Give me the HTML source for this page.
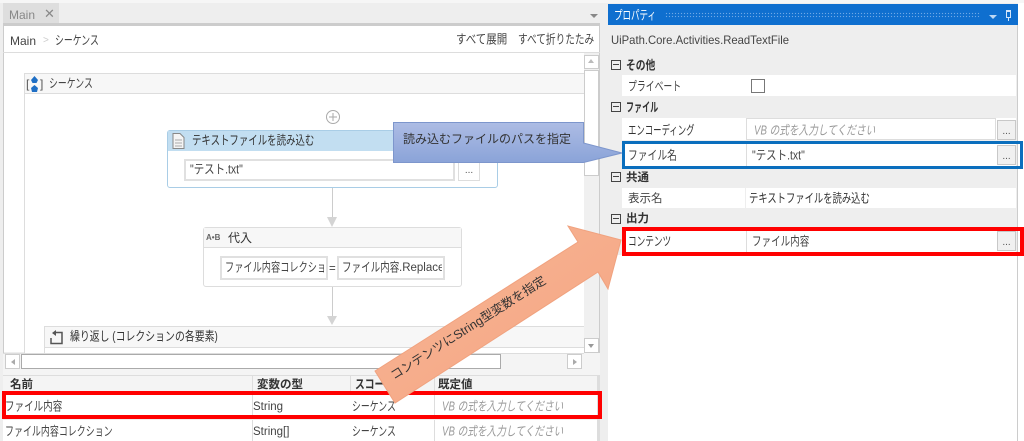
<!DOCTYPE html>
<html lang="ja"><head><meta charset="utf-8"><style>
html,body{margin:0;padding:0}
body{width:1024px;height:441px;position:relative;overflow:hidden;background:#fff;font:11.5px "Liberation Sans","Noto Sans CJK JP",sans-serif;color:#444}
div,span.a{position:absolute;box-sizing:border-box}
#w{left:0;top:0;width:1024px;height:441px;filter:blur(.3px)}
.t{white-space:nowrap;line-height:16px;height:16px;margin-top:1px;transform-origin:left center}
.s{display:inline-block;transform-origin:left center}
.b{font-weight:bold;color:#333}
.i{color:#999;font-style:italic}
.sb{background:#fff;border:1px solid #ccc}
.inp{background:#fff;border:2px solid #e0e0e0}
.btn{background:#f0f0f0;border:1px solid #c8c8c8;color:#555;text-align:center;line-height:22px;font-size:10px}
.row{background:#fff;left:622px;width:394px}
.minus{width:10px;height:10px;left:611px;border:1px solid #444}
.minus:after{content:"";position:absolute;left:1px;right:1px;top:3px;height:1px;background:#444}
</style></head><body><div id="w">
<div style="left:0;top:0;width:1024px;height:441px;background:#eee"></div>
<div style="left:608px;top:255px;width:410px;height:186px;background:#fff"></div>
<div style="left:1018px;top:0;width:6px;height:441px;background:#fff"></div>
<div style="left:1017px;top:25px;width:1px;height:416px;background:#ccc"></div>
<div style="left:0;top:0;width:1024px;height:3px;background:#f6f6f6"></div>

<!-- left panel -->
<div style="left:3px;top:3px;width:56px;height:21px;background:#dedede"></div>
<div class="t" style="left:9px;top:6px;color:#888;font-size:12px">Main</div>
<div class="t" style="left:44px;top:5px;color:#888;font-size:13px">✕</div>
<div style="left:3px;top:23px;width:597px;height:3px;background:#ccc"></div>
<div style="left:590px;top:14px;width:0;height:0;border:4px solid transparent;border-top:4px solid #888"></div>
<div style="left:3px;top:26px;width:597px;height:326px;background:#fff"></div>
<div style="left:3px;top:26px;width:1px;height:350px;background:#ccc"></div>
<div style="left:599px;top:26px;width:1px;height:350px;background:#ccc"></div>
<div class="t" style="left:10px;top:32px;font-size:12px">Main</div>
<div class="t" style="left:43px;top:32px;color:#ccc;font-size:10px">&gt;</div>
<div class="t" style="left:55px;top:32px;transform:scale(.77,1.1)">シーケンス</div>
<div class="t" style="left:456px;top:31px;transform:scale(.91,1.1)">すべて展開</div>
<div class="t" style="left:518px;top:31px;transform:scale(.84,1.1)">すべて折りたたみ</div>
<div style="left:3px;top:52px;width:597px;height:1px;background:#ddd"></div>

<!-- sequence -->
<div style="left:24px;top:73px;width:560px;height:280px;border:1px solid #ddd;border-right:0;border-bottom:0;background:#fff"></div>
<div style="left:25px;top:74px;width:559px;height:20px;background:#f7f7f7;border-bottom:1px solid #ddd"></div>
<div class="t" style="left:26px;top:75px;color:#555;font-size:12px">[</div>
<div class="t" style="left:40px;top:75px;color:#555;font-size:12px">]</div>
<svg style="position:absolute;left:29px;top:75px" width="11" height="18"><path d="M5.500 1L9 5 7.500 8h-4L2 5Z M2 13l3.500-3L9 13l-1 4H3Z" fill="#1f6fc5"/></svg>
<div class="t" style="left:49px;top:75px;transform:scale(.77,1.1)">シーケンス</div>
<svg style="position:absolute;left:325px;top:109px" width="16" height="16"><circle cx="8" cy="8" r="6.500" fill="#fff" stroke="#aaa"/><path d="M8 4v8M4 8h8" stroke="#aaa"/></svg>

<!-- read activity -->
<div style="left:167px;top:130px;width:331px;height:58px;border:1px solid #a9cde6;border-radius:3px;background:#fff"></div>
<div style="left:168px;top:131px;width:329px;height:20px;background:#c2def1"></div>
<svg style="position:absolute;left:171px;top:132px" width="15" height="18"><path d="M2 1.500h7l4 4v11H2Z" fill="#f4f4f4" stroke="#888"/><path d="M4 8h7M4 11h7M4 14h7" stroke="#aaa"/></svg>
<div class="t" style="left:192px;top:132px;color:#333;transform:scale(.82,1.1)">テキストファイルを読み込む</div>
<div class="inp" style="left:184px;top:159px;width:271px;height:22px"></div>
<div class="t" style="left:190px;top:161px;transform:scale(.91,1.1)">"テスト.txt"</div>
<div class="btn" style="left:458px;top:159px;width:22px;height:22px;background:#fff;border-color:#ddd">...</div>

<!-- connector -->
<div style="left:332px;top:188px;width:1px;height:32px;background:#ccc"></div>
<div style="left:327px;top:217px;width:0;height:0;border-left:5px solid transparent;border-right:5px solid transparent;border-top:10px solid #d4d4d4"></div>

<!-- assign -->
<div style="left:203px;top:227px;width:259px;height:60px;border:1px solid #ddd;border-radius:3px;background:#fff"></div>
<div style="left:204px;top:228px;width:257px;height:20px;background:#f7f7f7;border-bottom:1px solid #ddd"></div>
<div class="t" style="left:206px;top:229px;font-size:8px;font-weight:bold;color:#666">A•B</div>
<div class="t" style="left:228px;top:229px;color:#333;font-size:12px">代入</div>
<div class="inp" style="left:220px;top:256px;width:108px;height:24px"></div>
<div class="t" style="left:225px;top:259px;width:99px;overflow:hidden"><span class="s" style="transform:scale(.8,1.1)">ファイル内容コレクション</span></div>
<div class="t" style="left:329px;top:260px">=</div>
<div class="inp" style="left:337px;top:256px;width:108px;height:24px"></div>
<div class="t" style="left:342px;top:259px;width:100px;overflow:hidden"><span class="s" style="transform:scale(.83,1.1);width:57px">ファイル内容</span><span>.Replace</span></div>

<div style="left:332px;top:287px;width:1px;height:32px;background:#ccc"></div>
<div style="left:327px;top:316px;width:0;height:0;border-left:5px solid transparent;border-right:5px solid transparent;border-top:9px solid #d4d4d4"></div>

<!-- foreach -->
<div style="left:44px;top:326px;width:540px;height:27px;border:1px solid #ddd;border-right:0;background:#f7f7f7"></div>
<div style="left:45px;top:347px;width:539px;height:6px;background:#fff;border-top:1px solid #ddd"></div>
<svg style="position:absolute;left:48px;top:329px" width="16" height="16"><path d="M6 3.500h8v11H3V9" fill="none" stroke="#555" stroke-width="1.500"/><path d="M8 1L4 4l4 3Z" fill="#555"/></svg>
<div class="t" style="left:70px;top:328px;color:#333;transform:scale(.86,1.1)">繰り返し (コレクションの各要素)</div>

<!-- scrollbars -->
<div style="left:584px;top:53px;width:15px;height:300px;background:#f0f0f0"></div>
<div class="sb" style="left:584px;top:55px;width:15px;height:14px"></div>
<div style="left:588px;top:59px;width:0;height:0;border:3.500px solid transparent;border-bottom:4px solid #bbb;border-top:0"></div>
<div class="sb" style="left:584px;top:70px;width:15px;height:106px"></div>
<div class="sb" style="left:584px;top:338px;width:15px;height:15px"></div>
<div style="left:588px;top:344px;width:0;height:0;border:3.500px solid transparent;border-top:4px solid #999;border-bottom:0"></div>
<div style="left:3px;top:353px;width:597px;height:22px;background:#f4f4f4"></div>
<div style="left:3px;top:353px;width:581px;height:1px;background:#ddd"></div>
<div class="sb" style="left:5px;top:354px;width:15px;height:15px"></div>
<div style="left:11px;top:359px;width:0;height:0;border:3px solid transparent;border-right:4px solid #aaa;border-left:0"></div>
<div style="left:21px;top:354px;width:480px;height:15px;background:#fff;border:1px solid #aaa"></div>
<div class="sb" style="left:567px;top:354px;width:15px;height:15px"></div>
<div style="left:573px;top:359px;width:0;height:0;border:3px solid transparent;border-left:4px solid #aaa;border-right:0"></div>

<!-- variables -->
<div style="left:3px;top:375px;width:597px;height:66px;background:#fff"></div>
<div style="left:3px;top:375px;width:597px;height:18px;background:#f4f4f4;border-top:1px solid #ddd"></div>
<div style="left:252px;top:375px;width:1px;height:66px;background:#ddd"></div>
<div style="left:350px;top:375px;width:1px;height:18px;background:#ddd"></div>
<div style="left:434px;top:375px;width:1px;height:66px;background:#ddd"></div>
<div style="left:597px;top:375px;width:3px;height:66px;background:#ddd"></div>
<div style="left:3px;top:419px;width:594px;height:1px;background:#eee"></div>
<div class="t b" style="left:10px;top:376px">名前</div>
<div class="t b" style="left:257px;top:376px">変数の型</div>
<div class="t b" style="left:355px;top:376px;transform:scale(.85,1.1)">スコープ</div>
<div class="t b" style="left:438px;top:376px">既定値</div>
<div class="t" style="left:5px;top:398px;transform:scale(.83,1.1)">ファイル内容</div>
<div class="t" style="left:253px;top:398px">String</div>
<div class="t" style="left:352px;top:398px;transform:scale(.77,1.1)">シーケンス</div>
<div class="t i" style="left:442px;top:398px;transform:scale(.84,1.1)">VB の式を入力してください</div>
<div class="t" style="left:5px;top:423px;transform:scale(.78,1.1)">ファイル内容コレクション</div>
<div class="t" style="left:253px;top:423px">String[]</div>
<div class="t" style="left:352px;top:423px;transform:scale(.77,1.1)">シーケンス</div>
<div class="t i" style="left:442px;top:423px;transform:scale(.84,1.1)">VB の式を入力してください</div>
<div style="left:2px;top:391px;width:600px;height:28px;border:4px solid #f00"></div>

<!-- properties -->
<div style="left:608px;top:4px;width:410px;height:21px;background:#0f6fcf"></div>
<div class="t" style="left:614px;top:7px;color:#fff;font-size:11.5px;transform:scale(.74,1.1)">プロパティ</div>
<div style="left:665px;top:12px;width:315px;height:6px;background-image:radial-gradient(#6fa8e6 0.7px,transparent 0.8px);background-size:3px 3px"></div>
<div style="left:989px;top:15px;width:0;height:0;border:4px solid transparent;border-top:4px solid #bcd8f5"></div>
<div style="left:1006px;top:10px;width:5px;height:8px;border:1px solid #d4e6fa;border-top:2px solid #d4e6fa"></div>
<div style="left:1008px;top:18px;width:1px;height:3px;background:#d4e6fa"></div>
<div class="t" style="left:611px;top:31px;font-size:12px;transform:scaleX(.94)">UiPath.Core.Activities.ReadTextFile</div>

<div class="minus" style="top:60px"></div><div class="t b" style="left:626px;top:57px;transform:scale(.85,1.1)">その他</div>
<div class="row" style="top:75px;height:21px"></div>
<div class="t" style="left:628px;top:78px;transform:scale(.77,1.1)">プライベート</div>
<div style="left:751px;top:79px;width:14px;height:14px;border:1px solid #777;background:#fff"></div>

<div class="minus" style="top:102px"></div><div class="t b" style="left:626px;top:99px;transform:scale(.7,1.1)">ファイル</div>
<div class="row" style="top:118px;height:22px"></div>
<div class="t" style="left:628px;top:122px;color:#333;transform:scale(.73,1.1)">エンコーディング</div>
<div style="left:746px;top:118px;width:250px;height:22px;border:1px solid #ddd;background:#fff"></div>
<div class="t i" style="left:754px;top:122px;transform:scale(.84,1.1)">VB の式を入力してください</div>
<div class="btn" style="left:997px;top:120px;width:19px;height:20px">...</div>

<div class="row" style="top:144px;height:22px"></div>
<div class="t" style="left:628px;top:147px;transform:scale(.85,1.1)">ファイル名</div>
<div style="left:746px;top:144px;width:250px;height:22px;border-left:1px solid #ddd;background:#fff"></div>
<div class="t" style="left:752px;top:147px;transform:scale(.91,1.1)">"テスト.txt"</div>
<div class="btn" style="left:997px;top:145px;width:19px;height:20px">...</div>
<div style="left:622px;top:141px;width:401px;height:28px;border:3px solid #0a6ebd"></div>

<div class="minus" style="top:172px"></div><div class="t b" style="left:626px;top:169px">共通</div>
<div class="row" style="top:188px;height:20px"></div>
<div style="left:745px;top:188px;width:1px;height:20px;background:#eee"></div>
<div class="t" style="left:628px;top:190px">表示名</div>
<div class="t" style="left:749px;top:190px;color:#333;transform:scale(.81,1.1)">テキストファイルを読み込む</div>

<div class="minus" style="top:214px"></div><div class="t b" style="left:626px;top:210px">出力</div>
<div class="row" style="top:230px;height:22px"></div>
<div class="t" style="left:628px;top:233px;color:#333;transform:scale(.75,1.1)">コンテンツ</div>
<div style="left:746px;top:230px;width:250px;height:22px;border-left:1px solid #ddd;background:#fff"></div>
<div class="t" style="left:752px;top:233px;transform:scale(.83,1.1)">ファイル内容</div>
<div class="btn" style="left:997px;top:231px;width:19px;height:20px">...</div>
<div style="left:622px;top:227px;width:402px;height:29px;border:4px solid #f00"></div>

<!-- annotations -->
<svg style="position:absolute;left:0;top:0" width="1024" height="441">
<defs>
<linearGradient id="g1" x1="0" y1="0" x2="0" y2="1"><stop offset="0" stop-color="#adbce4"/><stop offset="1" stop-color="#8aa3d8"/></linearGradient>
<linearGradient id="g2" x1="0" y1="0" x2="1" y2="1"><stop offset="0" stop-color="#f8b595"/><stop offset="1" stop-color="#f4a582"/></linearGradient>
</defs>
<path d="M393.500 122.500H583.500V143L622 153L583.500 162.500H393.500Z" fill="url(#g1)" stroke="#7d96cc"/>
<path d="M375 371L578 242L568 226L621 240L608 289L598 272L395 403Z" fill="url(#g2)" stroke="#f0a27f"/>
<text x="403" y="143" font-size="12" fill="#333" font-family="Liberation Sans, Noto Sans CJK JP, sans-serif">読み込むファイルのパスを指定</text>
<text transform="translate(394 380) rotate(-32.500)" font-size="12.400" fill="#333" font-family="Liberation Sans, Noto Sans CJK JP, sans-serif">コンテンツにString型変数を指定</text>
</svg>
</div></body></html>
